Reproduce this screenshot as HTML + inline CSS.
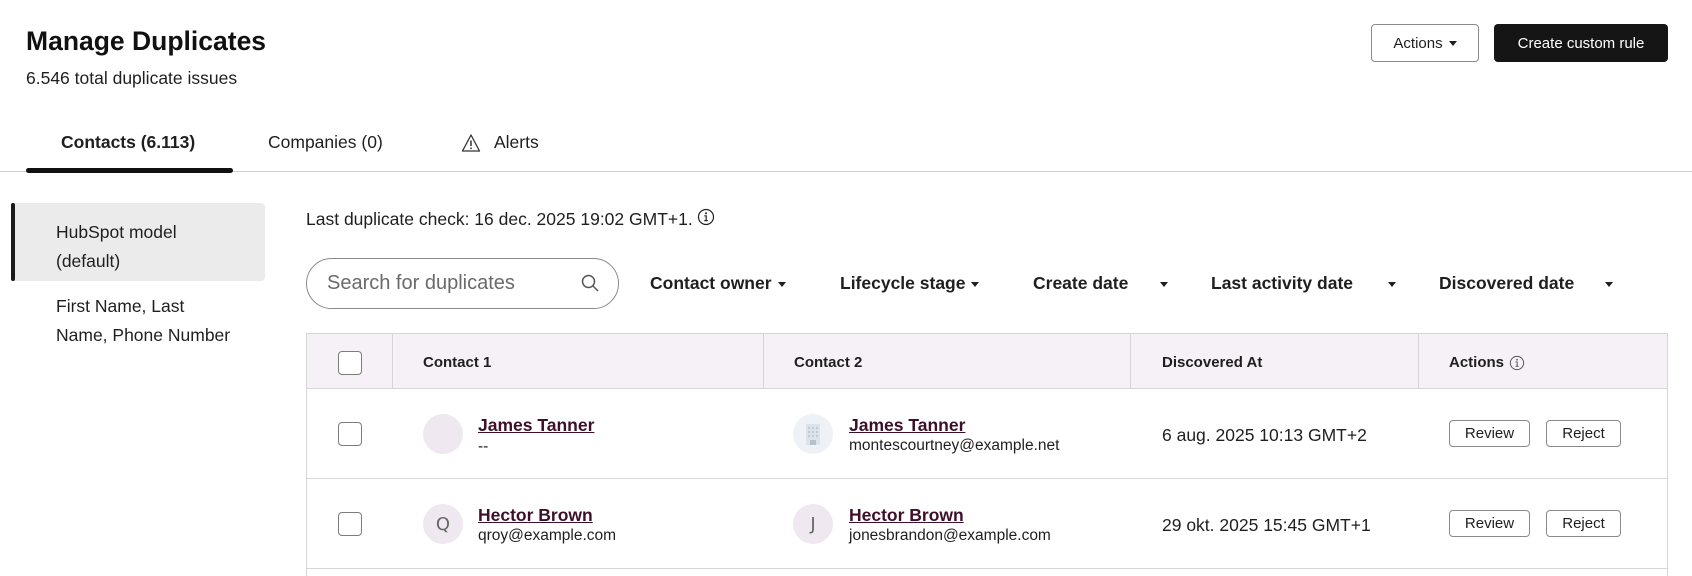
<!DOCTYPE html>
<html><head><meta charset="utf-8"><style>
*{box-sizing:border-box;margin:0;padding:0}
body{width:1692px;height:576px;overflow:hidden;background:#fff;font-family:"Liberation Sans",sans-serif;color:#1f1f1f;position:relative}
.a{position:absolute;white-space:nowrap}
.btn{position:absolute;border-radius:4px;font-size:15px;display:flex;align-items:center;justify-content:center}
.caret{display:inline-block;width:0;height:0;border-left:4px solid transparent;border-right:4px solid transparent;border-top:5px solid #1f1f1f;margin-left:6px;vertical-align:middle}
.f{position:absolute;top:273px;font-size:17.5px;font-weight:bold;white-space:nowrap}
.cb{position:absolute;width:24px;height:24px;border:1px solid #7c7c7c;border-radius:4px;background:#fff}
.av{position:absolute;width:40px;height:40px;border-radius:50%;background:#efe8f0;color:#666;font-size:18px;display:flex;align-items:center;justify-content:center;font-family:"DejaVu Sans",sans-serif}
.nm{position:absolute;font-size:17.5px;font-weight:bold;color:#3d0f2a;text-decoration:underline;white-space:nowrap}
.em{position:absolute;font-size:15.5px;white-space:nowrap}
.sb{position:absolute;height:27px;border:1px solid #8a8a8a;border-radius:4px;font-size:15px;display:flex;align-items:center;justify-content:center;background:#fff}
.line{position:absolute;background:#d6d6d6}
</style></head><body>
<div class="a" style="left:26px;top:26px;font-size:26.5px;font-weight:bold;color:#111">Manage Duplicates</div>
<div class="a" style="left:26px;top:68px;font-size:17.5px">6.546 total duplicate issues</div>
<div class="btn" style="left:1371px;top:24px;width:108px;height:38px;border:1px solid #8a8a8a">Actions<span class="caret"></span></div>
<div class="btn" style="left:1494px;top:24px;width:174px;height:38px;background:#151515;color:#fff">Create custom rule</div>

<div class="a" style="left:61px;top:132px;font-size:17.5px;font-weight:bold">Contacts (6.113)</div>
<div class="a" style="left:268px;top:132px;font-size:17.5px">Companies (0)</div>
<svg class="a" style="left:461px;top:133px" width="20" height="20" viewBox="0 0 20 20"><path d="M10 2 L18.5 18 H1.5 Z" fill="none" stroke="#333" stroke-width="1.3" stroke-linejoin="round"/><path d="M10 7.5v5.5" stroke="#333" stroke-width="1.5"/><circle cx="10" cy="15.3" r=".9" fill="#333"/></svg>
<div class="a" style="left:494px;top:132px;font-size:17.5px">Alerts</div>
<div class="line" style="left:0;top:171px;width:1692px;height:1px;background:#cfcfcf"></div>
<div class="a" style="left:26px;top:168px;width:207px;height:5px;border-radius:3px;background:#111"></div>

<div class="a" style="left:11px;top:203px;width:254px;height:78px;background:#ebebeb;border-radius:0 4px 4px 0"></div>
<div class="a" style="left:11px;top:203px;width:4px;height:78px;background:#1a1a1a;border-radius:2px"></div>
<div class="a" style="left:56px;top:218px;font-size:17.5px;line-height:29px">HubSpot model<br>(default)</div>
<div class="a" style="left:56px;top:292px;font-size:17.5px;line-height:29px">First Name, Last<br>Name, Phone Number</div>

<div class="a" style="left:306px;top:208px;font-size:17.5px">Last duplicate check: 16 dec. 2025 19:02 GMT+1.<svg style="vertical-align:-1px;margin-left:4px" width="18" height="18" viewBox="0 0 18 18"><circle cx="9" cy="9" r="7.5" fill="none" stroke="#222" stroke-width="1.2"/><circle cx="9" cy="5.3" r="1" fill="#222"/><path d="M7.3 7.8H9.2V12.6M7.3 12.6H10.8" fill="none" stroke="#222" stroke-width="1.2"/></svg></div>

<div class="a" style="left:306px;top:258px;width:313px;height:51px;border:1px solid #8a8a8a;border-radius:26px"></div>
<div class="a" style="left:327px;top:272px;font-size:20px;color:#6a6a6a">Search for duplicates</div>
<svg class="a" style="left:580px;top:273px" width="20" height="20" viewBox="0 0 20 20"><circle cx="8.5" cy="8.5" r="6" fill="none" stroke="#555" stroke-width="1.5"/><path d="M13 13l5 5" stroke="#555" stroke-width="1.5"/></svg>

<div class="f" style="left:650px">Contact owner<span class="caret"></span></div>
<div class="f" style="left:840px">Lifecycle stage<span class="caret"></span></div>
<div class="f" style="left:1033px">Create date</div><span class="caret a" style="left:1154px;top:282px"></span>
<div class="f" style="left:1211px">Last activity date</div><span class="caret a" style="left:1382px;top:282px"></span>
<div class="f" style="left:1439px">Discovered date</div><span class="caret a" style="left:1599px;top:282px"></span>

<div class="a" style="left:306px;top:333px;width:1362px;height:56px;background:#f5f1f6"></div>
<div class="line" style="left:306px;top:333px;width:1362px;height:1px"></div>
<div class="line" style="left:306px;top:388px;width:1362px;height:1px"></div>
<div class="line" style="left:306px;top:478px;width:1362px;height:1px"></div>
<div class="line" style="left:306px;top:568px;width:1362px;height:1px"></div>
<div class="line" style="left:306px;top:333px;width:1px;height:243px"></div>
<div class="line" style="left:1667px;top:333px;width:1px;height:243px"></div>
<div class="line" style="left:392px;top:333px;width:1px;height:56px"></div>
<div class="line" style="left:763px;top:333px;width:1px;height:56px"></div>
<div class="line" style="left:1130px;top:333px;width:1px;height:56px"></div>
<div class="line" style="left:1418px;top:333px;width:1px;height:56px"></div>

<div class="cb" style="left:338px;top:351px"></div>
<div class="a" style="left:423px;top:354px;font-size:15px;font-weight:bold">Contact 1</div>
<div class="a" style="left:794px;top:354px;font-size:15px;font-weight:bold">Contact 2</div>
<div class="a" style="left:1162px;top:354px;font-size:15px;font-weight:bold">Discovered At</div>
<div class="a" style="left:1449px;top:354px;font-size:15px;font-weight:bold">Actions</div>
<svg class="a" style="left:1509px;top:355px" width="16" height="16" viewBox="0 0 18 18"><circle cx="9" cy="9" r="7.5" fill="none" stroke="#555" stroke-width="1.1"/><circle cx="9" cy="5.3" r="1" fill="#555"/><path d="M7.3 7.8H9.2V12.6M7.3 12.6H10.8" fill="none" stroke="#555" stroke-width="1.1"/></svg>

<div class="cb" style="left:338px;top:422px"></div>
<div class="av" style="left:423px;top:414px"></div>
<div class="nm" style="left:478px;top:415px">James Tanner</div>
<div class="em" style="left:478px;top:438px">--</div>
<div class="av" style="left:793px;top:414px;background:#eef1f5">
<svg width="18" height="22" viewBox="0 0 18 22"><rect x="2" y="1" width="14" height="21" fill="#dde3ea"/><g fill="#c2cad4"><rect x="4" y="4" width="2" height="2"/><rect x="8" y="4" width="2" height="2"/><rect x="12" y="4" width="2" height="2"/><rect x="4" y="8" width="2" height="2"/><rect x="8" y="8" width="2" height="2"/><rect x="12" y="8" width="2" height="2"/><rect x="4" y="12" width="2" height="2"/><rect x="8" y="12" width="2" height="2"/><rect x="12" y="12" width="2" height="2"/></g><rect x="6" y="17" width="6" height="5" fill="#b5c0cc"/></svg></div>
<div class="nm" style="left:849px;top:415px">James Tanner</div>
<div class="em" style="left:849px;top:437px">montescourtney@example.net</div>
<div class="a" style="left:1162px;top:425px;font-size:17.5px">6 aug. 2025 10:13 GMT+2</div>
<div class="sb" style="left:1449px;top:420px;width:81px">Review</div>
<div class="sb" style="left:1546px;top:420px;width:75px">Reject</div>

<div class="cb" style="left:338px;top:512px"></div>
<div class="av" style="left:423px;top:504px">Q</div>
<div class="nm" style="left:478px;top:505px">Hector Brown</div>
<div class="em" style="left:478px;top:527px">qroy@example.com</div>
<div class="av" style="left:793px;top:504px">J</div>
<div class="nm" style="left:849px;top:505px">Hector Brown</div>
<div class="em" style="left:849px;top:527px">jonesbrandon@example.com</div>
<div class="a" style="left:1162px;top:515px;font-size:17.5px">29 okt. 2025 15:45 GMT+1</div>
<div class="sb" style="left:1449px;top:510px;width:81px">Review</div>
<div class="sb" style="left:1546px;top:510px;width:75px">Reject</div>
</body></html>
